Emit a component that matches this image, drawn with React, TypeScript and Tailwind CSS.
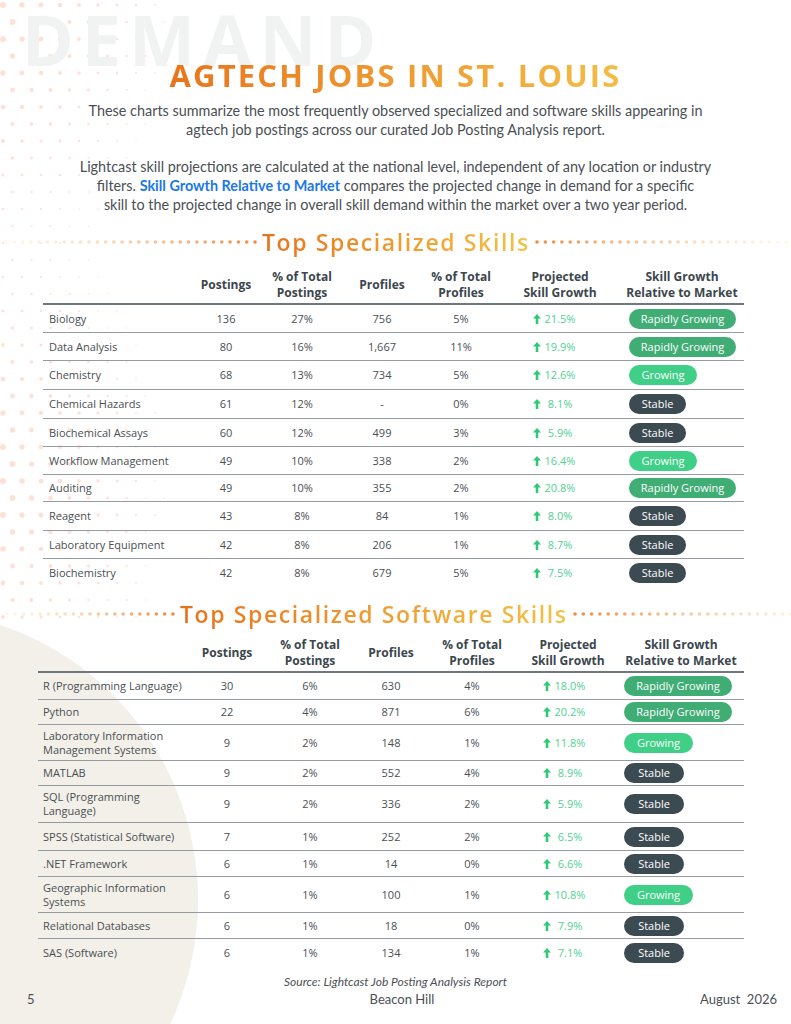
import React from 'react';

type Growth = 'Rapidly Growing' | 'Growing' | 'Stable';

interface SkillRow {
  name: string;
  postings: string;
  pctPostings: string;
  profiles: string;
  pctProfiles: string;
  projected: string;
  growth: Growth;
  h: string;
}

const SPECIALIZED: SkillRow[] = [
  { name: 'Biology', postings: '136', pctPostings: '27%', profiles: '756', pctProfiles: '5%', projected: '21.5%', growth: 'Rapidly Growing', h: 'h-[28px]' },
  { name: 'Data Analysis', postings: '80', pctPostings: '16%', profiles: '1,667', pctProfiles: '11%', projected: '19.9%', growth: 'Rapidly Growing', h: 'h-[28px]' },
  { name: 'Chemistry', postings: '68', pctPostings: '13%', profiles: '734', pctProfiles: '5%', projected: '12.6%', growth: 'Growing', h: 'h-[29px]' },
  { name: 'Chemical Hazards', postings: '61', pctPostings: '12%', profiles: '-', pctProfiles: '0%', projected: '8.1%', growth: 'Stable', h: 'h-[29px]' },
  { name: 'Biochemical Assays', postings: '60', pctPostings: '12%', profiles: '499', pctProfiles: '3%', projected: '5.9%', growth: 'Stable', h: 'h-[28px]' },
  { name: 'Workflow Management', postings: '49', pctPostings: '10%', profiles: '338', pctProfiles: '2%', projected: '16.4%', growth: 'Growing', h: 'h-[28px]' },
  { name: 'Auditing', postings: '49', pctPostings: '10%', profiles: '355', pctProfiles: '2%', projected: '20.8%', growth: 'Rapidly Growing', h: 'h-[27px]' },
  { name: 'Reagent', postings: '43', pctPostings: '8%', profiles: '84', pctProfiles: '1%', projected: '8.0%', growth: 'Stable', h: 'h-[29px]' },
  { name: 'Laboratory Equipment', postings: '42', pctPostings: '8%', profiles: '206', pctProfiles: '1%', projected: '8.7%', growth: 'Stable', h: 'h-[28px]' },
  { name: 'Biochemistry', postings: '42', pctPostings: '8%', profiles: '679', pctProfiles: '5%', projected: '7.5%', growth: 'Stable', h: 'h-[28px]' },
];

const SOFTWARE: SkillRow[] = [
  { name: 'R (Programming Language)', postings: '30', pctPostings: '6%', profiles: '630', pctProfiles: '4%', projected: '18.0%', growth: 'Rapidly Growing', h: 'h-[27px]' },
  { name: 'Python', postings: '22', pctPostings: '4%', profiles: '871', pctProfiles: '6%', projected: '20.2%', growth: 'Rapidly Growing', h: 'h-[25px]' },
  { name: 'Laboratory Information Management Systems', postings: '9', pctPostings: '2%', profiles: '148', pctProfiles: '1%', projected: '11.8%', growth: 'Growing', h: 'h-[36px]' },
  { name: 'MATLAB', postings: '9', pctPostings: '2%', profiles: '552', pctProfiles: '4%', projected: '8.9%', growth: 'Stable', h: 'h-[25px]' },
  { name: 'SQL (Programming Language)', postings: '9', pctPostings: '2%', profiles: '336', pctProfiles: '2%', projected: '5.9%', growth: 'Stable', h: 'h-[37px]' },
  { name: 'SPSS (Statistical Software)', postings: '7', pctPostings: '1%', profiles: '252', pctProfiles: '2%', projected: '6.5%', growth: 'Stable', h: 'h-[28px]' },
  { name: '.NET Framework', postings: '6', pctPostings: '1%', profiles: '14', pctProfiles: '0%', projected: '6.6%', growth: 'Stable', h: 'h-[26px]' },
  { name: 'Geographic Information Systems', postings: '6', pctPostings: '1%', profiles: '100', pctProfiles: '1%', projected: '10.8%', growth: 'Growing', h: 'h-[36px]' },
  { name: 'Relational Databases', postings: '6', pctPostings: '1%', profiles: '18', pctProfiles: '0%', projected: '7.9%', growth: 'Stable', h: 'h-[26px]' },
  { name: 'SAS (Software)', postings: '6', pctPostings: '1%', profiles: '134', pctProfiles: '1%', projected: '7.1%', growth: 'Stable', h: 'h-[27px]' },
];

// Layout for each table: column grid, left offset, badge widths
interface TableLayout {
  wrap: string;
  grid: string;
  header: string;
  namePad: string;
  arrowPad: string;
  badgePad: string;
  badgeW: Record<Growth, string>;
}

const LAYOUT_SPECIALIZED: TableLayout = {
  wrap: 'ml-[43px] w-[701px]',
  grid: 'grid grid-cols-[147px_72px_80px_80px_78px_120px_124px]',
  header: 'h-[38px]',
  namePad: 'pl-[6px]',
  arrowPad: 'pl-[33px]',
  badgePad: 'pl-[9px]',
  badgeW: { 'Rapidly Growing': 'w-[107px]', Growing: 'w-[68px]', Stable: 'w-[57px]' },
};

const LAYOUT_SOFTWARE: TableLayout = {
  wrap: 'ml-[38px] w-[706px]',
  grid: 'grid grid-cols-[152px_74px_92px_70px_92px_100px_126px]',
  header: 'h-[39px]',
  namePad: 'pl-[5px]',
  arrowPad: 'pl-[25px]',
  badgePad: 'pl-[6px]',
  badgeW: { 'Rapidly Growing': 'w-[108px]', Growing: 'w-[69px]', Stable: 'w-[60px]' },
};

const BADGE_COLOR: Record<Growth, string> = {
  'Rapidly Growing': 'bg-[#40ad75]',
  Growing: 'bg-[#40cf86]',
  Stable: 'bg-[#3c4a52]',
};

const mix = (a: number[], b: number[], t: number) =>
  `rgb(${a.map((v, i) => Math.round(v + (b[i] - v) * t)).join(',')})`;

// Row of fading dots beside the section titles
const DotLine = ({ width, strongEnd }: { width: number; strongEnd: 'left' | 'right' }) => {
  const gap = 8.3;
  const n = Math.floor(width / gap);
  const pale = [254, 247, 232];
  const strong = [238, 140, 66];
  return (
    <svg width={width} height={8} className="block shrink-0">
      {Array.from({ length: n }, (_, i) => {
        const pos = i / (n - 1);
        const t = strongEnd === 'right' ? pos : 1 - pos;
        const cx = strongEnd === 'right' ? width - 3 - (n - 1 - i) * gap : 3 + i * gap;
        return <circle key={i} cx={cx} cy={4} r={1.8} fill={mix(pale, strong, Math.pow(t, 1.4))} />;
      })}
    </svg>
  );
};

// Peach halftone pattern in the upper left corner
const Halftone = () => {
  const dots: React.ReactNode[] = [];
  for (let row = 0; row < 37; row++) {
    const y = 5 + row * 17;
    for (let col = 0; col < 14; col++) {
      const x = (row % 2 ? 9.5 : 0) + col * 19 + 3;
      const fade = 1 - x / 215;
      const wave = 0.7 + 0.3 * Math.cos(row / 4.5);
      const r = 3.1 * fade * wave;
      if (r < 0.7) continue;
      dots.push(<circle key={`${row}-${col}`} cx={x} cy={y} r={r} />);
    }
  }
  return (
    <svg width={260} height={630} className="absolute left-0 top-0" fill="#fcdacd" opacity={0.8}>
      {dots}
    </svg>
  );
};

const UpArrow = () => (
  <svg width={8} height={10} viewBox="0 0 8 10" className="shrink-0">
    <path d="M4 0 L8 4.6 H5.3 V10 H2.7 V4.6 H0 Z" fill="#2fc977" />
  </svg>
);

const SkillTable = ({ rows, layout }: { rows: SkillRow[]; layout: TableLayout }) => (
  <div className={`${layout.wrap} font-['Open_Sans',sans-serif]`}>
    <div className={`${layout.grid} ${layout.header} items-center border-b-2 border-[#6f787d] text-[12px] font-bold leading-[16px] text-[#3b464d] text-center`}>
      <div />
      <div>Postings</div>
      <div>% of Total<br />Postings</div>
      <div>Profiles</div>
      <div>% of Total<br />Profiles</div>
      <div>Projected<br />Skill Growth</div>
      <div>Skill Growth<br />Relative to Market</div>
    </div>
    {rows.map((r, i) => (
      <div
        key={r.name}
        className={`${layout.grid} ${r.h} items-center text-[11px] leading-[14px] text-[#4a4f54] ${
          i < rows.length - 1 ? 'border-b-[1.5px] border-[#959ba0]' : ''
        }`}
      >
        <div className={`${layout.namePad} pr-2`}>{r.name}</div>
        <div className="text-center">{r.postings}</div>
        <div className="text-center">{r.pctPostings}</div>
        <div className="text-center">{r.profiles}</div>
        <div className="text-center">{r.pctProfiles}</div>
        <div className={`flex items-center ${layout.arrowPad}`}>
          <UpArrow />
          <span className="w-[38px] text-center text-[#52d193]">{r.projected}</span>
        </div>
        <div className={layout.badgePad}>
          <div
            className={`${layout.badgeW[r.growth]} ${BADGE_COLOR[r.growth]} flex h-[20px] items-center justify-center rounded-full text-[11px] text-white`}
          >
            {r.growth}
          </div>
        </div>
      </div>
    ))}
  </div>
);

const SectionTitle = ({ text, leftWidth, className }: { text: string; leftWidth: number; className: string }) => (
  <div className={`flex items-center overflow-hidden ${className}`}>
    <DotLine width={leftWidth} strongEnd="right" />
    <h2 className="shrink-0 px-[4px] font-['Open_Sans',sans-serif] text-[23px] font-semibold leading-[30px] tracking-[0.07em] bg-linear-to-r from-[#e8701a] to-[#f3c344] bg-clip-text text-transparent">
      {text}
    </h2>
    <DotLine width={260} strongEnd="left" />
  </div>
);

export default function App() {
  return (
    <div className="relative h-[1024px] w-[791px] overflow-hidden bg-white">
      {/* Background decoration */}
      <div className="absolute left-[-498px] top-[610px] h-[580px] w-[696px] rounded-full bg-[#f3efe9]" />
      <Halftone />
      <div className="absolute left-[22px] top-[4px] font-['Open_Sans',sans-serif] text-[70px] font-bold leading-none tracking-[0.115em] text-[#f1f2f2]">
        DEMAND
      </div>

      <div className="relative">
        <h1 className="mt-[60px] text-center font-['Open_Sans',sans-serif] text-[31px] font-bold leading-none tracking-[0.07em]">
          <span className="bg-linear-to-r from-[#e8741a] to-[#f3bd45] bg-clip-text text-transparent">
            AGTECH JOBS IN ST. LOUIS
          </span>
        </h1>

        <div className="mx-auto mt-[10px] w-[720px] text-center font-['Lato',sans-serif] text-[14.4px] leading-[19px] text-[#4b5055]">
          <p>
            These charts summarize the most frequently observed specialized and software skills appearing in
            <br />
            agtech job postings across our curated Job Posting Analysis report.
          </p>
          <p className="mt-[18px]">
            Lightcast skill projections are calculated at the national level, independent of any location or industry
            <br />
            filters. <span className="font-bold text-[#1a78e6]">Skill Growth Relative to Market</span> compares the
            projected change in demand for a specific
            <br />
            skill to the projected change in overall skill demand within the market over a two year period.
          </p>
        </div>

        <SectionTitle text="Top Specialized Skills" leftWidth={258} className="mt-[13px]" />
        <div className="mt-[10px]">
          <SkillTable rows={SPECIALIZED} layout={LAYOUT_SPECIALIZED} />
        </div>

        <SectionTitle text="Top Specialized Software Skills" leftWidth={176} className="mt-[12px]" />
        <div className="mt-[5px]">
          <SkillTable rows={SOFTWARE} layout={LAYOUT_SOFTWARE} />
        </div>

        <p className="mt-[8px] text-center font-['Lato',sans-serif] text-[12px] italic leading-[16px] text-[#4b5055]">
          Source: Lightcast Job Posting Analysis Report
        </p>
        <div className="flex items-center pl-[27px] pr-[14px] font-['Lato',sans-serif] text-[13px] leading-[18px] text-[#4b5055]">
          <span className="w-[100px]">5</span>
          <span className="flex-1 text-center">Beacon Hill</span>
          <span className="w-[100px] whitespace-pre text-right">August  2026</span>
        </div>
      </div>
    </div>
  );
}
